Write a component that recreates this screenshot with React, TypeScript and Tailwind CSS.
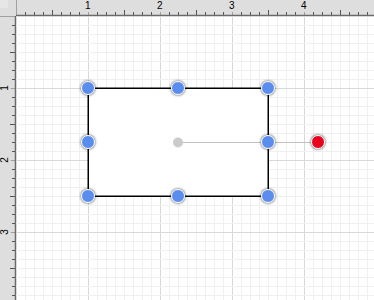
import React from "react";

const UNIT = 72;
const STEP = 9;

function TopRuler() {
  const ticks: React.ReactNode[] = [];
  for (let x = 0; x <= 360; x += STEP) {
    const major = x % UNIT === 0;
    const half = x % 36 === 0;
    const h = major ? 15 : half ? 5 : 3;
    ticks.push(<line key={x} x1={x + 0.5} x2={x + 0.5} y1={15 - h} y2={15} stroke={major ? "#a0a0a0" : "#555"} strokeWidth={1} />);
  }
  return (
    <svg width={358} height={16} className="block">
      {ticks}
      <line x1={0} x2={358} y1={15.5} y2={15.5} stroke="#6a6a6a" strokeWidth={1.5} />
    </svg>
  );
}

function LeftRuler() {
  const ticks: React.ReactNode[] = [];
  for (let y = 0; y <= 290; y += STEP) {
    const major = y % UNIT === 0;
    const half = y % 36 === 0;
    const w = major ? 15 : half ? 5 : 3;
    ticks.push(<line key={y} y1={y + 0.5} y2={y + 0.5} x1={15 - w} x2={15} stroke={major ? "#a0a0a0" : "#555"} strokeWidth={1} />);
  }
  return (
    <svg width={16} height={284} className="block">
      {ticks}
      <line y1={0} y2={284} x1={15.5} x2={15.5} stroke="#6a6a6a" strokeWidth={1.5} />
    </svg>
  );
}

function Grid() {
  const lines: React.ReactNode[] = [];
  for (let x = 0; x <= 360; x += STEP) {
    const major = x % UNIT === 0;
    lines.push(<line key={"v" + x} x1={x + 0.5} x2={x + 0.5} y1={0} y2={290} stroke={major ? "#d8d8d8" : "#f0f0f0"} strokeWidth={1} />);
  }
  for (let y = 0; y <= 290; y += STEP) {
    const major = y % UNIT === 0;
    lines.push(<line key={"h" + y} y1={y + 0.5} y2={y + 0.5} x1={0} x2={360} stroke={major ? "#d8d8d8" : "#f0f0f0"} strokeWidth={1} />);
  }
  return (
    <svg width={358} height={284} className="absolute left-0 top-0">
      {lines}
      <rect x={72.25} y={72.25} width={180} height={108} fill="white" stroke="#000" strokeWidth={1.5} />
      <line x1={162} x2={302} y1={126.5} y2={126.5} stroke="#c2c2c2" strokeWidth={1} />
      <circle cx={162} cy={126.5} r={5} fill="#cbcbcb" />
    </svg>
  );
}

function Handle({ x, y, red }: { x: number; y: number; red?: boolean }) {
  return (
    <div
      className={
        "absolute w-[14px] h-[14px] rounded-full border-[1.5px] border-white shadow-[0_0_2px_1px_rgba(0,0,0,0.35)] " +
        (red ? "bg-[#e8001e]" : "bg-[#5b8def]")
      }
      style={{ left: x - 7, top: y - 7 }}
    />
  );
}

export default function App() {
  const xs = [72, 162, 252];
  const ys = [72, 126, 180];
  const handles: { x: number; y: number }[] = [];
  ys.forEach((y) => xs.forEach((x) => {
    if (!(x === 162 && y === 126)) handles.push({ x, y });
  }));
  return (
    <div className="w-[374px] h-[300px] overflow-hidden bg-white flex flex-col" style={{ fontFamily: '"Liberation Sans", Arial, sans-serif' }}>
      <div className="flex h-[16px] bg-[#dedede]">
        <div className="w-[16px] h-[16px] bg-[#dedede] relative">
          <div className="absolute left-0 top-0 w-[8px] h-[8px] bg-[#e6e6e6]" />
        </div>
        <div className="relative">
          <TopRuler />
          {[1, 2, 3, 4].map((n) => (
            <span key={n} className="absolute top-[0px] text-[10px] leading-[12px] text-black px-[1px] bg-[#dedede]" style={{ left: n * UNIT - 4 }}>
              {n}
            </span>
          ))}
        </div>
      </div>
      <div className="flex flex-1">
        <div className="w-[16px] bg-[#dedede] relative">
          <LeftRuler />
          {[1, 2, 3].map((n) => (
            <span key={n} className="absolute left-[1px] text-[10px] leading-[12px] text-black -rotate-90 px-[1px] bg-[#dedede]" style={{ top: n * UNIT - 6 }}>
              {n}
            </span>
          ))}
        </div>
        <div className="relative flex-1 bg-white">
          <Grid />
          {handles.map((h, i) => (
            <Handle key={i} x={h.x} y={h.y} />
          ))}
          <Handle x={302} y={126} red />
        </div>
      </div>
    </div>
  );
}
